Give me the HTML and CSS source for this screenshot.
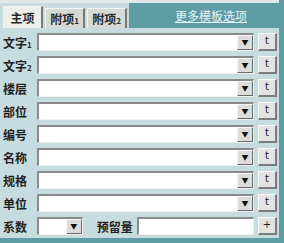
FILE: index.html
```html
<!DOCTYPE html>
<html lang="zh">
<head>
<meta charset="UTF-8" />
<title>属性</title>
<link rel="stylesheet" href="styles.css">
</head>
<body>
  <div class="panel">

    <!-- tab bar -->
    <div class="tabbar">
      <div class="tab active">主项</div>
      <div class="tab">附项<small>1</small></div>
      <div class="tab">附项<small>2</small></div>
      <div class="more"><a>更多模板选项</a></div>
    </div>

    <!-- fields -->
    <div class="rows">
      <div class="row">
        <span class="label">文字<small>1</small></span>
        <div class="combo"><span class="drop">&#9660;</span></div>
        <span class="btn">t</span>
      </div>
      <div class="row">
        <span class="label">文字<small>2</small></span>
        <div class="combo"><span class="drop">&#9660;</span></div>
        <span class="btn">t</span>
      </div>
      <div class="row">
        <span class="label">楼层</span>
        <div class="combo"><span class="drop">&#9660;</span></div>
        <span class="btn">t</span>
      </div>
      <div class="row">
        <span class="label">部位</span>
        <div class="combo"><span class="drop">&#9660;</span></div>
        <span class="btn">t</span>
      </div>
      <div class="row">
        <span class="label">编号</span>
        <div class="combo"><span class="drop">&#9660;</span></div>
        <span class="btn">t</span>
      </div>
      <div class="row">
        <span class="label">名称</span>
        <div class="combo"><span class="drop">&#9660;</span></div>
        <span class="btn">t</span>
      </div>
      <div class="row">
        <span class="label">规格</span>
        <div class="combo"><span class="drop">&#9660;</span></div>
        <span class="btn">t</span>
      </div>
      <div class="row">
        <span class="label">单位</span>
        <div class="combo"><span class="drop">&#9660;</span></div>
        <span class="btn">t</span>
      </div>
      <div class="row last">
        <span class="label">系数</span>
        <div class="combo small"><span class="drop">&#9660;</span></div>
        <span class="label2">预留量</span>
        <div class="combo plain"></div>
        <span class="btn">+</span>
      </div>
    </div>

  </div>
</body>
</html>
```

FILE: styles.css
```css
* {
  box-sizing: border-box;
}

html, body {
  margin: 0;
  padding: 0;
  background: #c6dcdf;
}

.panel {
  width: 284px;
  height: 243px;
  background: #c6dcdf;
  border-right: 5px solid #5e9ca6;
  border-bottom: 5px solid #5e9ca6;
  font-family: "Noto Sans CJK SC", "DejaVu Sans", sans-serif;
  font-size: 12px;
  color: #1c1c1c;
}

/* Tabs */
.tabbar {
  display: flex;
  align-items: flex-end;
  height: 28px;
  border-top: 3px solid #dfe7e7;
  padding-left: 3px;
}

.tab {
  width: 40px;
  height: 20px;
  margin-right: 2px;
  background: #d5dad5;
  border-top: 1px solid #f4f4f4;
  border-left: 1px solid #f4f4f4;
  border-right: 2px solid #7a7a7a;
  text-align: center;
  line-height: 19px;
  font-weight: bold;
  color: #2a2a2a;
}

.tab.active {
  height: 22px;
  background: #eceeea;
  line-height: 21px;
}

.tab small, .label small {
  font-size: 8px;
  font-weight: bold;
}

.more {
  flex: 1;
  height: 25px;
  background: #5e9ca6;
  text-align: center;
  line-height: 25px;
}

.more a {
  color: #e4f3f3;
  text-decoration: underline;
  font-size: 12px;
  padding-left: 14px;
}

/* Rows */
.rows {
  display: flex;
  flex-direction: column;
  gap: 5px;
  padding: 5px 2px 0 3px;
}

.row {
  display: flex;
  align-items: center;
  height: 18px;
}

.label {
  width: 34px;
  font-weight: bold;
  color: #222;
  white-space: nowrap;
}

.combo {
  position: relative;
  width: 217px;
  height: 18px;
  background: #fff;
  border-top: 2px solid #8a8a8a;
  border-left: 2px solid #8a8a8a;
  border-right: 1px solid #eef0f0;
  border-bottom: 1px solid #eef0f0;
}

.drop {
  position: absolute;
  right: 0;
  top: 0;
  width: 16px;
  height: 15px;
  background: #dcdcdc;
  border-top: 1px solid #f6f6f6;
  border-left: 1px solid #f6f6f6;
  border-right: 1px solid #6a6a6a;
  border-bottom: 1px solid #6a6a6a;
  font-size: 7px;
  line-height: 13px;
  text-align: center;
  color: #111;
}

.btn {
  width: 19px;
  height: 18px;
  margin-left: 4px;
  background: #e2e4e2;
  border-top: 1px solid #fafafa;
  border-left: 1px solid #fafafa;
  border-right: 2px solid #7c7c7c;
  border-bottom: 2px solid #7c7c7c;
  text-align: center;
  font-family: "DejaVu Sans", sans-serif;
  font-size: 10px;
  line-height: 14px;
  color: #222;
}

.combo.small {
  width: 46px;
}

.label2 {
  width: 40px;
  margin-left: 14px;
  font-weight: bold;
  color: #222;
}

.combo.plain {
  width: 118px;
}
```
